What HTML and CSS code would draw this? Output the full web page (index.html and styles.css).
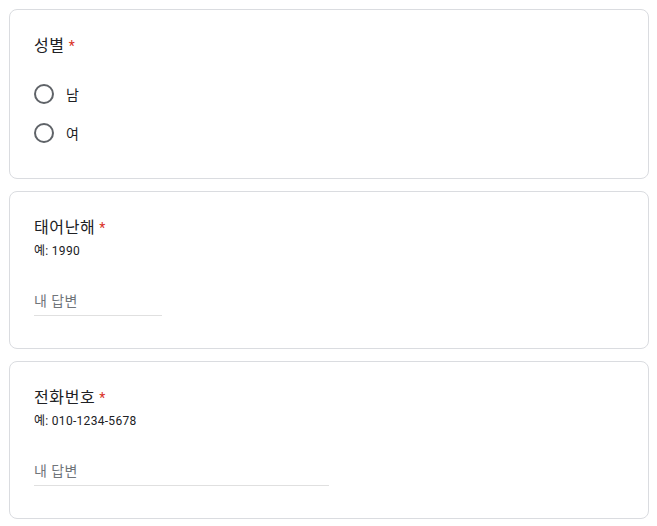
FILE: index.html
```html
<!DOCTYPE html>
<html>
<head>
  <title>신청서</title>
  <link rel="stylesheet" href="styles.css">
</head>
<body>

  <div class="form">

    <div class="card choice">
      <div class="question">성별<span class="req">*</span></div>
      <div class="options">
        <label class="option">
          <span class="radio"></span>
          <span class="option-label">남</span>
        </label>
        <label class="option">
          <span class="radio"></span>
          <span class="option-label">여</span>
        </label>
      </div>
    </div>

    <div class="card">
      <div class="question">태어난해<span class="req">*</span></div>
      <div class="hint">예: 1990</div>
      <div class="answer short">내 답변</div>
    </div>

    <div class="card">
      <div class="question">전화번호<span class="req">*</span></div>
      <div class="hint">예: 010-1234-5678</div>
      <div class="answer long">내 답변</div>
    </div>

  </div>

</body>
</html>
```

FILE: styles.css
```css
body {
  margin: 0;
  background: #fff;
  font-family: Roboto, "Noto Sans CJK KR", sans-serif;
  color: #202124;
}

.form {
  display: flex;
  flex-direction: column;
  gap: 12px;
  padding: 9px 8px 9px 9px;
}

.card {
  border: 1px solid #dadce0;
  border-radius: 8px;
  padding: 25px 24px 32px 24px;
}

.card.choice {
  padding-bottom: 33px;
}

.question {
  font-size: 16px;
  line-height: 22px;
  letter-spacing: 0.6px;
}

.req {
  color: #d93025;
  font-size: 14px;
  padding-left: 4px;
}

/* radio list */
.options {
  display: flex;
  flex-direction: column;
  gap: 15px;
  margin-top: 25px;
}

.option {
  display: flex;
  align-items: center;
  height: 24px;
  font-size: 14px;
  letter-spacing: 0.2px;
}

.radio {
  width: 16px;
  height: 16px;
  border: 2px solid #5f6368;
  border-radius: 50%;
}

.option-label {
  margin-left: 12px;
}

/* text answers */
.hint {
  font-size: 12px;
  line-height: 16px;
  letter-spacing: 0.3px;
  margin-top: 4px;
}

.answer {
  margin-top: 32px;
  font-size: 14px;
  line-height: 20px;
  letter-spacing: 0.4px;
  color: #70757a;
  padding-bottom: 4px;
  border-bottom: 1px solid #e0e0e0;
}

.answer.short { width: 128px; }
.answer.long { width: 295px; }
```
